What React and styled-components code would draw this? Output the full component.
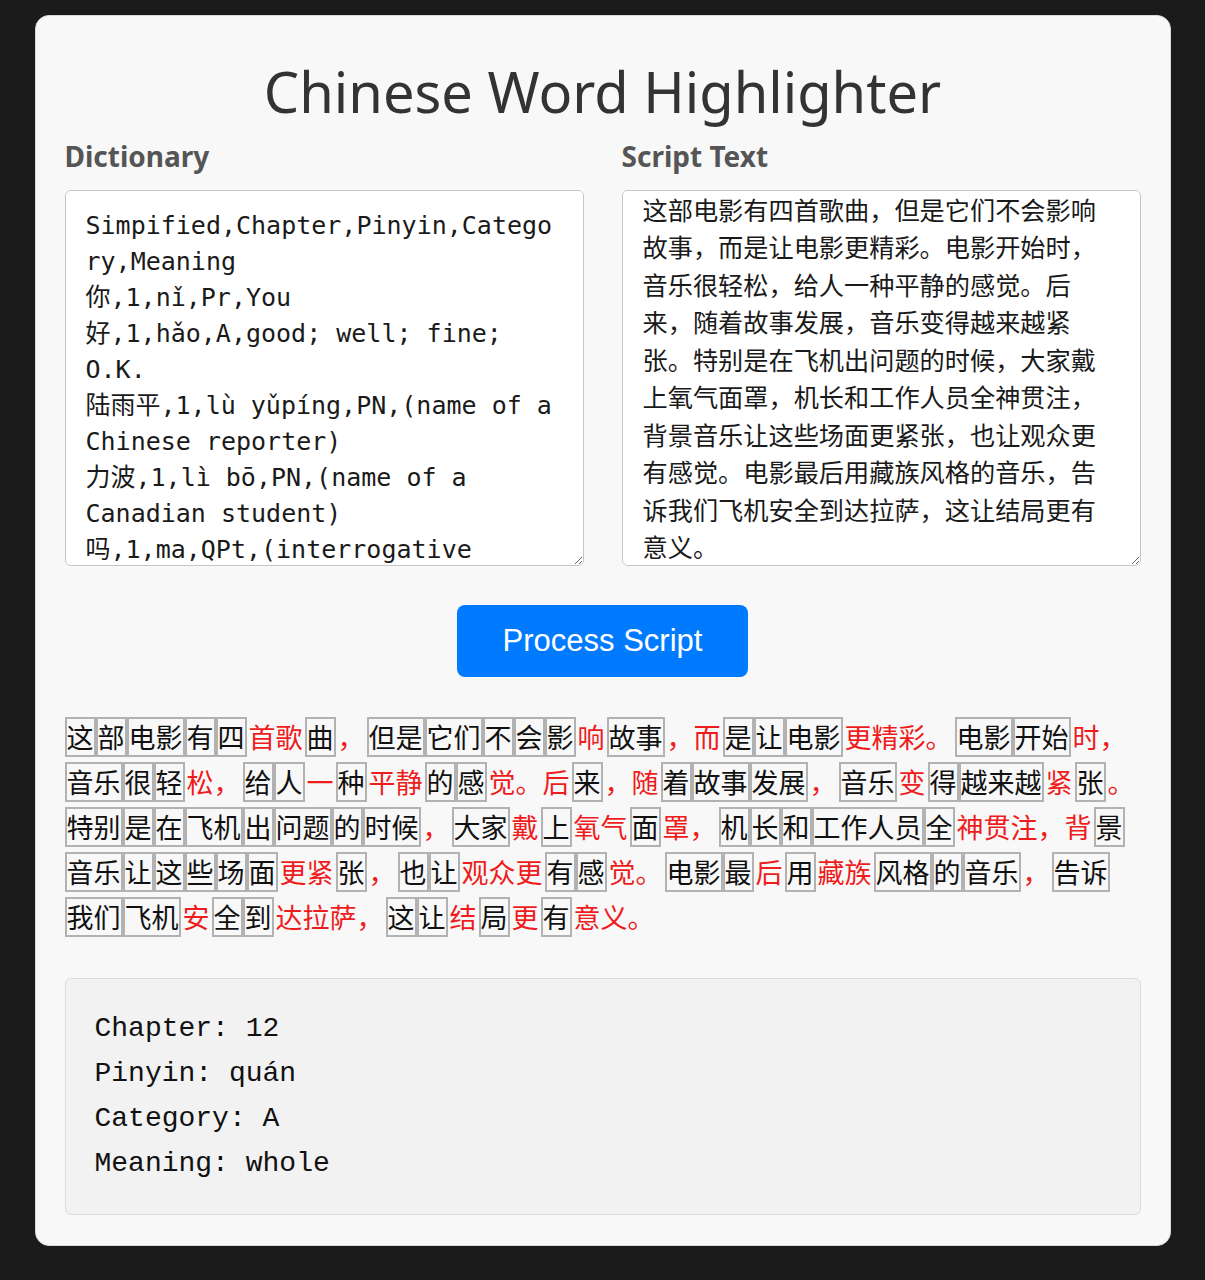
import React, { useEffect, useRef } from "react";
import styled, { createGlobalStyle } from "styled-components";

const GlobalStyle = createGlobalStyle`
  html, body {
    margin: 0;
    padding: 0;
    background: #1b1b1b;
  }
  body {
    font-family: "Noto Sans", sans-serif;
  }
`;

const Page = styled.div`
  padding: 15px 0 34px;
`;

const Card = styled.main`
  box-sizing: border-box;
  width: 1136px;
  margin: 0 auto;
  background: #f8f8f8;
  border: 1px solid #d9d9d9;
  border-radius: 14px;
  padding: 41px 29px 30px;
  display: flex;
  flex-direction: column;
`;

const Title = styled.h1`
  margin: 0 0 11px;
  text-align: center;
  font-family: "Noto Sans", sans-serif;
  font-weight: 400;
  font-size: 56px;
  line-height: 69.6px;
  color: #333;
`;

const Editors = styled.div`
  display: grid;
  grid-template-columns: 1fr 1fr;
  column-gap: 38px;
`;

const Field = styled.div`
  display: flex;
  flex-direction: column;
`;

const Label = styled.label`
  font-family: "Noto Sans", sans-serif;
  font-weight: 700;
  font-size: 28px;
  line-height: 37.7px;
  color: #555;
  margin-bottom: 14.7px;
`;

const TextArea = styled.textarea`
  box-sizing: border-box;
  display: block;
  width: 100%;
  height: 376px;
  margin: 0;
  padding: 17px 20px 16px;
  border: 1px solid #c6c6c6;
  border-radius: 6px;
  background: #fff;
  color: #1a1a1a;
  resize: vertical;
  outline: none;
  scrollbar-width: none;
  font-family: ${(p) =>
    p.$mono
      ? '"DejaVu Sans Mono", "Noto Sans CJK SC", monospace'
      : '"Noto Sans CJK SC", sans-serif'};
  font-size: ${(p) => (p.$mono ? "25px" : "25.2px")};
  line-height: ${(p) => (p.$mono ? "36px" : "37.5px")};
  &::-webkit-scrollbar {
    display: none;
  }
`;

const ButtonRow = styled.div`
  display: flex;
  justify-content: center;
  margin-top: 39px;
`;

const ProcessButton = styled.button`
  width: 291px;
  height: 72px;
  border: 0;
  border-radius: 8px;
  background: #007bff;
  color: #fff;
  font-family: "Liberation Sans", Arial, sans-serif;
  font-size: 31px;
  cursor: pointer;
`;

const Highlighted = styled.div`
  margin-top: 40px;
  font-family: "Noto Sans CJK SC", sans-serif;
  font-size: 27px;
  line-height: 45px;
  color: #111;
`;

const Word = styled.span`
  display: inline-block;
  vertical-align: top;
  line-height: 36px;
  border: 2px solid ${(p) => (p.$known ? "#b2b2b2" : "transparent")};
  color: ${(p) => (p.$known ? "#111" : "#ee1c1c")};
  cursor: ${(p) => (p.$known ? "pointer" : "default")};
`;

const Info = styled.pre`
  margin: 36px 0 0;
  padding: 27px 29px 28px;
  border: 1px solid #dcdcdc;
  border-radius: 6px;
  background: #f2f2f2;
  font-family: "Liberation Mono", monospace;
  font-size: 28px;
  line-height: 45px;
  color: #111;
  white-space: pre-wrap;
`;

const DICTIONARY = `Simpified,Chapter,Pinyin,Category,Meaning
你,1,nǐ,Pr,You
好,1,hǎo,A,good; well; fine; O.K.
陆雨平,1,lù yǔpíng,PN,(name of a Chinese reporter)
力波,1,lì bō,PN,(name of a Canadian student)
吗,1,ma,QPt,(interrogative particle)
很,1,hěn,Adv,very
我,1,wǒ,Pr,I; me
呢,1,ne,MPt,(modal particle)
也,1,yě,Adv,too; also`;

const SCRIPT =
  "这部电影有四首歌曲，但是它们不会影响故事，而是让电影更精彩。电影开始时，音乐很轻松，给人一种平静的感觉。后来，随着故事发展，音乐变得越来越紧张。特别是在飞机出问题的时候，大家戴上氧气面罩，机长和工作人员全神贯注，背景音乐让这些场面更紧张，也让观众更有感觉。电影最后用藏族风格的音乐，告诉我们飞机安全到达拉萨，这让结局更有意义。";

// tokens: a leading * marks text not found in the dictionary
const TOKENS = [
  "这", "部", "电影", "有", "四", "*首歌", "曲", "*，", "但是", "它们", "不", "会", "影", "*响",
  "故事", "*，而", "是", "让", "电影", "*更精彩。", "电影", "开始", "*时，",
  "音乐", "很", "轻", "*松，", "给", "人", "*一", "种", "*平静", "的", "感", "*觉。后", "来",
  "*，随", "着", "故事", "发展", "*，", "音乐", "*变", "得", "越来越", "*紧", "张", "*。",
  "特别", "是", "在", "飞机", "出", "问题", "的", "时候", "*，", "大家", "*戴", "上", "*氧气",
  "面", "*罩，", "机", "长", "和", "工作人员", "全", "*神贯注，背", "景",
  "音乐", "让", "这", "些", "场", "面", "*更紧", "张", "*，", "也", "让", "*观众更", "有", "感",
  "*觉。", "电影", "最", "*后", "用", "*藏族", "风格", "的", "音乐", "*，", "告诉",
  "我们", "飞机", "*安", "全", "到", "*达拉萨，", "这", "让", "*结", "局", "*更", "有", "*意义。",
];

const INFO = `Chapter: 12
Pinyin: quán
Category: A
Meaning: whole`;

export default function App() {
  const scriptRef = useRef(null);

  useEffect(() => {
    if (scriptRef.current) scriptRef.current.scrollTop = 17;
  }, []);

  return (
    <>
      <GlobalStyle />
      <Page>
        <Card>
          <Title>Chinese Word Highlighter</Title>
          <Editors>
            <Field>
              <Label htmlFor="dict">Dictionary</Label>
              <TextArea id="dict" $mono defaultValue={DICTIONARY} spellCheck={false} />
            </Field>
            <Field>
              <Label htmlFor="script">Script Text</Label>
              <TextArea id="script" ref={scriptRef} defaultValue={SCRIPT} spellCheck={false} />
            </Field>
          </Editors>
          <ButtonRow>
            <ProcessButton type="button">Process Script</ProcessButton>
          </ButtonRow>
          <Highlighted>
            {TOKENS.map((t, i) => {
              const known = !t.startsWith("*");
              return (
                <Word key={i} $known={known}>
                  {known ? t : t.slice(1)}
                </Word>
              );
            })}
          </Highlighted>
          <Info>{INFO}</Info>
        </Card>
      </Page>
    </>
  );
}
